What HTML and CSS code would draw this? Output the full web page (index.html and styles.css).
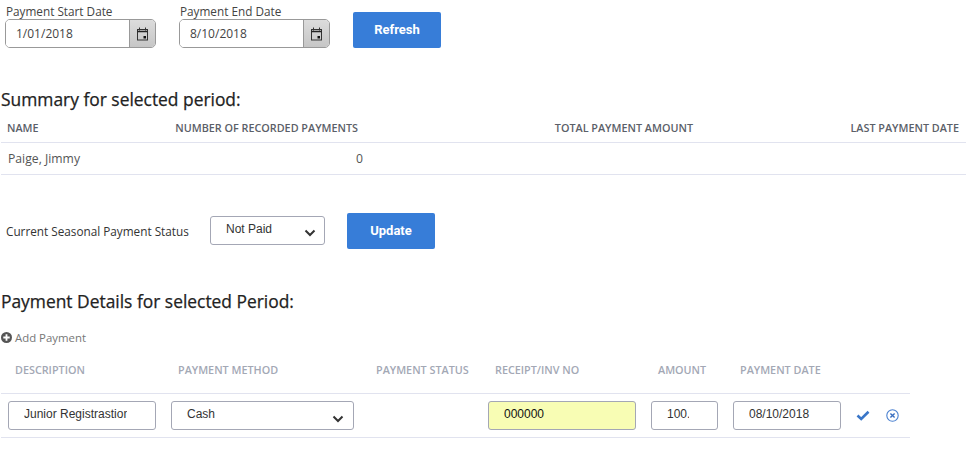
FILE: index.html
```html
<!DOCTYPE html>
<html lang="en">
<head>
  <meta charset="UTF-8">
  <title>Payments</title>
  <link rel="stylesheet" href="styles.css">
</head>
<body>

<div class="filters">
  <div class="field">
    <label>Payment Start Date</label>
    <div class="datepicker">
      <input type="text" value="1/01/2018">
      <span class="cal">
        <svg width="13" height="14" viewBox="0 0 13 14"><path d="M3.5 0.5v3M9.5 0.5v3" stroke="#333" stroke-width="1"/><rect x="1.5" y="2.5" width="10" height="10.5" fill="none" stroke="#333"/><path d="M1.5 4.5h10" stroke="#222" stroke-width="1.6"/><rect x="7.5" y="9" width="2.5" height="2.5" fill="#111"/></svg>
      </span>
    </div>
  </div>
  <div class="field">
    <label>Payment End Date</label>
    <div class="datepicker">
      <input type="text" value="8/10/2018">
      <span class="cal">
        <svg width="13" height="14" viewBox="0 0 13 14"><path d="M3.5 0.5v3M9.5 0.5v3" stroke="#333" stroke-width="1"/><rect x="1.5" y="2.5" width="10" height="10.5" fill="none" stroke="#333"/><path d="M1.5 4.5h10" stroke="#222" stroke-width="1.6"/><rect x="7.5" y="9" width="2.5" height="2.5" fill="#111"/></svg>
      </span>
    </div>
  </div>
  <button class="btn">Refresh</button>
</div>

<h2 class="title-summary">Summary for selected period:</h2>
<div class="summary">
  <div class="summary-row summary-head">
    <div class="cell-name">NAME</div>
    <div class="cell-num">NUMBER OF RECORDED PAYMENTS</div>
    <div class="cell-right">TOTAL PAYMENT AMOUNT</div>
    <div class="cell-right">LAST PAYMENT DATE</div>
  </div>
  <div class="summary-row summary-body">
    <div class="cell-person">Paige, Jimmy</div>
    <div class="cell-count">0</div>
    <div></div>
    <div></div>
  </div>
</div>

<div class="status">
  <span class="status-label">Current Seasonal Payment Status</span>
  <div class="select status-select">Not Paid
    <svg class="chev" width="12" height="8" viewBox="0 0 12 8"><path d="M1.5 1.5L6 6l4.5-4.5" fill="none" stroke="#333" stroke-width="2"/></svg>
  </div>
  <button class="btn">Update</button>
</div>

<h2 class="title-details">Payment Details for selected Period:</h2>
<div class="add">
  <svg width="11" height="11" viewBox="0 0 12 12"><circle cx="6" cy="6" r="6" fill="#555"/><path d="M6 2.5v7M2.5 6h7" stroke="#fff" stroke-width="2"/></svg>
  Add Payment
</div>

<div class="details">
  <div class="details-row details-head">
    <div>DESCRIPTION</div>
    <div>PAYMENT METHOD</div>
    <div>PAYMENT STATUS</div>
    <div>RECEIPT/INV NO</div>
    <div>AMOUNT</div>
    <div>PAYMENT DATE</div>
    <div></div>
  </div>
  <div class="details-row details-body">
    <div><input class="inp" type="text" value="Junior Registrastion"></div>
    <div>
      <div class="select">Cash
        <svg class="chev chev-low" width="12" height="8" viewBox="0 0 12 8"><path d="M1.5 1.5L6 6l4.5-4.5" fill="none" stroke="#333" stroke-width="2"/></svg>
      </div>
    </div>
    <div></div>
    <div><input class="inp inp-yellow" type="text" value="000000"></div>
    <div><input class="inp" type="text" value="100.00"></div>
    <div><input class="inp" type="text" value="08/10/2018"></div>
    <div class="actions">
      <svg width="14" height="11" viewBox="0 0 14 11"><path d="M1.5 5.5L5.2 9 12.5 1.8" fill="none" stroke="#3a76c8" stroke-width="2.6"/></svg>
      <svg width="13" height="13" viewBox="0 0 13 13"><circle cx="6.5" cy="6.5" r="5.7" fill="none" stroke="#4a80d0" stroke-width="1.1"/><path d="M4.4 4.4l4.2 4.2M8.6 4.4l-4.2 4.2" stroke="#3a6fc0" stroke-width="1.4"/></svg>
    </div>
  </div>
</div>

</body>
</html>
```

FILE: styles.css
```css
body {
  margin: 0;
  padding-left: 1px;
  background: #fff;
  font-family: 'Open Sans', sans-serif;
  font-size: 12px;
  color: #333;
  overflow: hidden;
}

.filters {
  display: flex;
  align-items: flex-end;
  padding: 3px 0 0 4px;
}

.field {
  width: 151px;
  margin-right: 23px;
}

.field label {
  display: block;
  padding-left: 1px;
  height: 16px;
  line-height: 16px;
  font-size: 11.75px;
  color: #444;
}

.datepicker {
  display: flex;
  height: 29px;
  box-sizing: border-box;
  border: 1px solid #999;
  border-radius: 5px;
  overflow: hidden;
}

.datepicker input {
  flex: 1;
  min-width: 0;
  border: none;
  padding: 0 0 0 10px;
  font-family: 'Open Sans', sans-serif;
  font-size: 12px;
  color: #444;
  outline: none;
}

.cal {
  width: 26px;
  box-sizing: border-box;
  display: flex;
  align-items: center;
  justify-content: center;
  border-left: 1px solid #999;
  background: linear-gradient(#dcdcdc, #c6c6c6);
}

.btn {
  width: 88px;
  height: 36px;
  border: none;
  border-radius: 2px;
  padding: 0 0 2px;
  background: #377dd8;
  color: #fff;
  font-family: Roboto, sans-serif;
  font-size: 13px;
  font-weight: 700;
}

h2 {
  margin: 0;
  font-size: 17.4px;
  font-weight: 500;
  color: #222;
  -webkit-text-stroke: 0.25px #222;
}

.title-summary {
  margin-top: 39px;
  line-height: 24px;
}

.summary-row {
  display: grid;
  grid-template-columns: 169px 196px 335px 266px;
  border-bottom: 1px solid #e1e3ef;
}

.summary-head {
  height: 31px;
  line-height: 33px;
  font-size: 10.8px;
  font-weight: 600;
  color: #5b6068;
}

.summary-body {
  height: 31px;
  line-height: 31px;
  font-size: 12.2px;
  color: #555;
}

.cell-name {
  padding-left: 6px;
}

.cell-person {
  padding-left: 7px;
}

.cell-num,
.cell-right {
  text-align: right;
  padding-right: 8px;
}

.cell-count {
  text-align: right;
  padding-right: 3px;
}

.status {
  display: flex;
  align-items: flex-start;
  margin-top: 38px;
  padding-left: 5px;
}

.status-label {
  width: 204px;
  line-height: 36px;
  font-size: 11.75px;
  color: #333;
}

.select {
  position: relative;
  height: 29px;
  box-sizing: border-box;
  border: 1px solid #a4a7b5;
  border-radius: 3px;
  padding-left: 15px;
  line-height: 25px;
  font-family: 'Liberation Sans', sans-serif;
  font-size: 12px;
  color: #333;
}

.status-select {
  width: 115px;
  margin: 3px 22px 0 0;
}

.chev {
  position: absolute;
  right: 8px;
  top: 12px;
}

.chev-low {
  right: 9px;
  top: 13px;
}

.title-details {
  margin-top: 40px;
  line-height: 24px;
}

.add {
  display: flex;
  align-items: center;
  gap: 3px;
  margin-top: 15px;
  height: 18px;
  font-size: 11.4px;
  color: #777;
}

.details {
  width: 909px;
  margin-top: 13px;
}

.details-row {
  display: grid;
  grid-template-columns: 163px 198px 119px 163px 82px 123px 61px;
  border-bottom: 1px solid #e1e3ef;
}

.details-head {
  height: 34px;
  line-height: 21px;
  font-size: 10.8px;
  font-weight: 600;
  color: #a3a8b5;
}

.details-head div {
  padding-left: 14px;
}

.details-body {
  height: 44px;
  padding-top: 7px;
  box-sizing: border-box;
}

.details-body > div {
  padding-left: 7px;
  padding-right: 8px;
}

.inp {
  display: block;
  width: 100%;
  height: 29px;
  box-sizing: border-box;
  border: 1px solid #a4a7b5;
  border-radius: 3px;
  padding: 0 28px 3px 15px;
  font-family: 'Liberation Sans', sans-serif;
  font-size: 12px;
  color: #333;
  outline: none;
}

.inp-yellow {
  background: #f8fdb4;
  color: #111;
}

.details-body > .actions {
  display: flex;
  align-items: center;
  gap: 16px;
  height: 29px;
  padding-left: 7px;
  padding-right: 0;
}
```
